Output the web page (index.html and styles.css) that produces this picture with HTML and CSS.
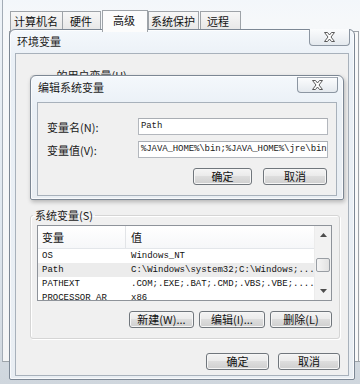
FILE: index.html
```html
<!DOCTYPE html>
<html lang="zh-CN">
<head>
<meta charset="utf-8">
<title>环境变量</title>
<link rel="stylesheet" href="styles.css">
</head>
<body>
<div class="desk">
  <div class="sysprops">
    <div class="tabs">
      <div class="tab t1">计算机名</div>
      <div class="tab t2">硬件</div>
      <div class="tab t3 active">高级</div>
      <div class="tab t4">系统保护</div>
      <div class="tab t5">远程</div>
    </div>
    <div class="tabpanel"></div>
  </div>

  <div class="win env">
    <div class="titlebar">
      <span class="title">环境变量</span>
      <div class="close">
        <svg width="11" height="10" viewBox="0 0 11 10"><path d="M0.5 0.5H3.5L5.5 3L7.5 0.5H10.5L7 5L10.5 9.5H7.5L5.5 7L3.5 9.5H0.5L4 5Z" fill="#fff" stroke="#5a5a5a" stroke-width="1" stroke-linejoin="round"/></svg>
      </div>
    </div>
    <div class="client">
      <fieldset class="group user">
        <legend>… 的用户变量(U)</legend>
      </fieldset>
      <fieldset class="group sys">
        <legend>系统变量(S)</legend>
        <div class="listbox">
          <div class="table">
            <div class="row head"><span class="c1">变量</span><span class="c2">值</span></div>
            <div class="row"><span class="c1">OS</span><span class="c2">Windows_NT</span></div>
            <div class="row sel"><span class="c1">Path</span><span class="c2">C:\Windows\system32;C:\Windows;...</span></div>
            <div class="row"><span class="c1">PATHEXT</span><span class="c2">.COM;.EXE;.BAT;.CMD;.VBS;.VBE;....</span></div>
            <div class="row"><span class="c1">PROCESSOR_AR</span><span class="c2">x86</span></div>
          </div>
          <div class="vscroll">
            <div class="arrow">
              <svg width="7" height="4" viewBox="0 0 7 4"><path d="M0 4L3.5 0L7 4Z" fill="#4d4d4d"/></svg>
            </div>
            <div class="track"><div class="thumb"></div></div>
            <div class="arrow">
              <svg width="7" height="4" viewBox="0 0 7 4"><path d="M0 0L3.5 4L7 0Z" fill="#4d4d4d"/></svg>
            </div>
          </div>
        </div>
        <div class="btnrow">
          <div class="btn b-new">新建(W)...</div>
          <div class="btn b-edit">编辑(I)...</div>
          <div class="btn b-del">删除(L)</div>
        </div>
      </fieldset>
      <div class="footer">
        <div class="btn b-ok">确定</div>
        <div class="btn b-cancel">取消</div>
      </div>
    </div>
  </div>

  <div class="win edit">
    <div class="titlebar">
      <span class="title">编辑系统变量</span>
      <div class="close">
        <svg width="11" height="10" viewBox="0 0 11 10"><path d="M0.5 0.5H3.5L5.5 3L7.5 0.5H10.5L7 5L10.5 9.5H7.5L5.5 7L3.5 9.5H0.5L4 5Z" fill="#fff" stroke="#5a5a5a" stroke-width="1" stroke-linejoin="round"/></svg>
      </div>
    </div>
    <div class="client">
      <div class="field">
        <span class="label">变量名(N):</span>
        <div class="input">Path</div>
      </div>
      <div class="field">
        <span class="label">变量值(V):</span>
        <div class="input">%JAVA_HOME%\bin;%JAVA_HOME%\jre\bin</div>
      </div>
      <div class="footer">
        <div class="btn e-ok">确定</div>
        <div class="btn e-cancel">取消</div>
      </div>
    </div>
  </div>
</div>
</body>
</html>
```

FILE: styles.css
```css
* { box-sizing: border-box; }
html, body { margin: 0; padding: 0; }
body {
  font-family: "Noto Sans CJK SC", "Liberation Sans", sans-serif;
  font-size: 11px;
  color: #1a1a1a;
}
.desk {
  position: relative;
  width: 360px;
  height: 384px;
  overflow: hidden;
  background: linear-gradient(#eef3f8, #dfe7ef 60%, #cfd6dd);
}

/* background window: system properties */
.sysprops {
  margin-left: 2px;
  height: 362px;
  padding: 9px 0 0 6px;
  border-left: 1px solid #a3acb6;
  border-bottom: 1px solid #9da3a8;
  background: linear-gradient(#f3f7fb, #f6f8fa 20px, #f4f5f6);
  display: flex;
  flex-direction: column;
}
.tabs {
  display: flex;
  align-items: flex-end;
  height: 22px;
  padding-left: 1px;
}
.tab {
  height: 20px;
  line-height: 19px;
  padding: 0 0 0 3px;
  border: 1px solid #9ea3a8;
  border-bottom: none;
  background: linear-gradient(#f7f7f7, #e6e6e6);
  color: #111;
  white-space: nowrap;
  overflow: hidden;
  flex: none;
}
.t1 { width: 53px; }
.t2 { width: 39px; margin-left: -1px; padding-left: 7px; }
.t3 { width: 46px; margin-left: 1px; }
.t4 { width: 51px; margin-left: 0; padding-left: 2px; }
.t5 { width: 41px; margin-left: 1px; padding-left: 6px; }
.tab.active {
  height: 22px;
  background: #fcfcfc;
  padding-left: 10px;
  position: relative;
  z-index: 1;
  margin-bottom: -1px;
}
.tabpanel {
  flex: 1;
  margin-right: 1px;
  border: 1px solid #9ea3a8;
  border-bottom: none;
  background: #f9f9f9;
}

/* generic window */
.win {
  position: absolute;
  display: flex;
  flex-direction: column;
  border: 1px solid #7c8794;
  border-radius: 6px 6px 2px 2px;
  background: linear-gradient(#f4f8fc, #eaf0f6 30px, #e9eef3);
  box-shadow: 0 0 0 1px rgba(255,255,255,0.7) inset;
}
.titlebar {
  position: relative;
  display: flex;
  align-items: center;
  flex: none;
}
.title {
  color: #1c1c1c;
  font-size: 11px;
}
.close {
  position: absolute;
  top: -1px;
  display: flex;
  align-items: center;
  justify-content: center;
  border: 1px solid #8c96a2;
  border-top: none;
  border-radius: 0 0 4px 4px;
  background: linear-gradient(#fbfcfd, #e4e9ee);
}
.client {
  flex: 1;
  display: flex;
  flex-direction: column;
  background: #f0f0f0;
  border: 1px solid #a8b1bb;
}

/* environment variables dialog */
.env {
  left: 9px;
  top: 29px;
  width: 346px;
  height: 351px;
}
.env .titlebar { height: 23px; padding-left: 7px; padding-bottom: 2px; }
.env .close { right: 4px; width: 41px; height: 17px; }
.env .client { margin: 0 5px 3px 5px; padding: 0 8px 0 14px; }

.group {
  margin: 0;
  padding: 0;
  border: 1px solid #d5d5d5;
  border-radius: 3px;
  box-shadow: 1px 1px 0 #fff inset, 1px 1px 0 #fff;
  min-width: 0;
}
.group legend {
  padding: 0 2px;
  margin-left: -4px;
  line-height: 12px;
  font-size: 11px;
  color: #222;
}
.user { margin-top: 15px; height: 128px; }
.user legend { margin-left: 10px; }
.sys {
  margin-top: 12px;
  height: 130px;
  display: flex;
  flex-direction: column;
  padding: 4px 7px 0 6px;
}

.listbox {
  height: 76px;
  border: 1px solid #8e939a;
  background: #fff;
  display: flex;
  overflow: hidden;
}
.table { flex: 1; overflow: hidden; }
.row {
  display: flex;
  height: 14px;
  line-height: 14px;
  font-family: "Liberation Mono", "DejaVu Sans Mono", monospace;
  font-size: 9px;
  color: #111;
  white-space: nowrap;
}
.row .c1 { width: 88px; padding-left: 4px; overflow: hidden; }
.row .c2 { flex: 1; padding-left: 5px; overflow: hidden; }
.row.head {
  height: 23px;
  line-height: 22px;
  font-family: "Noto Sans CJK SC", sans-serif;
  font-size: 11px;
  background: linear-gradient(#ffffff, #f6f7f9);
  border-bottom: 1px solid #e3e6ea;
}
.row.head .c1 { border-right: 1px solid #e2e4e7; }
.row.sel { background: #ececec; }

.vscroll {
  width: 17px;
  flex: none;
  display: flex;
  flex-direction: column;
  background: #f2f2f2;
  border-left: 1px solid #ececec;
}
.arrow {
  height: 18px;
  display: flex;
  align-items: center;
  justify-content: center;
}
.track { flex: 1; padding: 14px 1px 0 1px; }
.thumb {
  height: 14px;
  border: 1px solid #999ea4;
  border-radius: 2px;
  background: linear-gradient(90deg, #f5f5f5, #e2e2e2);
}

.btn {
  height: 17px;
  line-height: 15px;
  text-align: center;
  border: 1px solid #70767c;
  border-radius: 3px;
  background: linear-gradient(#f4f4f4 0%, #ebebeb 45%, #dddddd 50%, #cfcfcf 100%);
  box-shadow: 0 0 0 1px #f6f6f6 inset;
  color: #111;
  font-size: 11px;
  flex: none;
}
.btnrow {
  display: flex;
  justify-content: flex-end;
  gap: 5px;
  margin-top: 10px;
}
.b-new { width: 65px; }
.b-edit { width: 66px; }
.b-del { width: 62px; }

.env .client > .footer {
  display: flex;
  justify-content: flex-end;
  gap: 9px;
  margin-top: 14px;
}
.b-ok { width: 63px; }
.b-cancel { width: 62px; }

/* edit dialog */
.edit {
  left: 30px;
  top: 75px;
  width: 314px;
  height: 125px;
  box-shadow: 0 0 0 1px rgba(255,255,255,0.7) inset, 1px 2px 4px rgba(0,0,0,0.25);
}
.edit .titlebar { height: 26px; padding-left: 7px; padding-bottom: 4px; }
.edit .close { right: 5px; width: 41px; height: 16px; top: 1px; border-top: 1px solid #a0a8b2; }
.edit .client { margin: 0 6px 3px 6px; padding: 15px 8px 0 9px; }
.field {
  display: flex;
  align-items: center;
  height: 17px;
  margin-bottom: 6px;
}
.label { width: 91px; flex: none; color: #1a1a1a; }
.input {
  flex: 1;
  height: 17px;
  line-height: 15px;
  border: 1px solid #b3b7bd;
  border-top-color: #a9adb3;
  background: #fff;
  padding-left: 2px;
  font-family: "Liberation Mono", "DejaVu Sans Mono", monospace;
  font-size: 9px;
  letter-spacing: -0.1px;
  white-space: nowrap;
  overflow: hidden;
}
.edit .footer {
  display: flex;
  justify-content: flex-end;
  gap: 11px;
  margin-top: 4px;
  padding-right: 1px;
}
.e-ok { width: 59px; }
.e-cancel { width: 64px; }
```
